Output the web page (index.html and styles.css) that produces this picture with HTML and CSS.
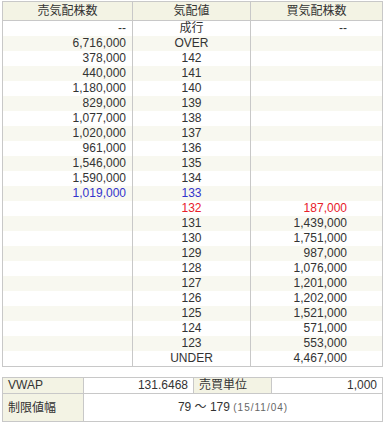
FILE: index.html
```html
<!DOCTYPE html>
<html lang="ja">
<head>
<meta charset="utf-8">
<link rel="stylesheet" href="styles.css">
</head>
<body>
<table class="book">
  <colgroup><col class="c1"><col class="c2"><col class="c3"></colgroup>
  <thead>
    <tr><th>売気配株数</th><th>気配値</th><th>買気配株数</th></tr>
  </thead>
  <tbody>
    <tr><td class="ask">--</td><td class="px">成行</td><td class="bid">--</td></tr>
    <tr><td class="ask">6,716,000</td><td class="px">OVER</td><td class="bid"></td></tr>
    <tr><td class="ask">378,000</td><td class="px">142</td><td class="bid"></td></tr>
    <tr><td class="ask">440,000</td><td class="px">141</td><td class="bid"></td></tr>
    <tr><td class="ask">1,180,000</td><td class="px">140</td><td class="bid"></td></tr>
    <tr><td class="ask">829,000</td><td class="px">139</td><td class="bid"></td></tr>
    <tr><td class="ask">1,077,000</td><td class="px">138</td><td class="bid"></td></tr>
    <tr><td class="ask">1,020,000</td><td class="px">137</td><td class="bid"></td></tr>
    <tr><td class="ask">961,000</td><td class="px">136</td><td class="bid"></td></tr>
    <tr><td class="ask">1,546,000</td><td class="px">135</td><td class="bid"></td></tr>
    <tr><td class="ask">1,590,000</td><td class="px">134</td><td class="bid"></td></tr>
    <tr><td class="ask blue">1,019,000</td><td class="px blue">133</td><td class="bid"></td></tr>
    <tr><td class="ask"></td><td class="px red">132</td><td class="bid red">187,000</td></tr>
    <tr><td class="ask"></td><td class="px">131</td><td class="bid">1,439,000</td></tr>
    <tr><td class="ask"></td><td class="px">130</td><td class="bid">1,751,000</td></tr>
    <tr><td class="ask"></td><td class="px">129</td><td class="bid">987,000</td></tr>
    <tr><td class="ask"></td><td class="px">128</td><td class="bid">1,076,000</td></tr>
    <tr><td class="ask"></td><td class="px">127</td><td class="bid">1,201,000</td></tr>
    <tr><td class="ask"></td><td class="px">126</td><td class="bid">1,202,000</td></tr>
    <tr><td class="ask"></td><td class="px">125</td><td class="bid">1,521,000</td></tr>
    <tr><td class="ask"></td><td class="px">124</td><td class="bid">571,000</td></tr>
    <tr><td class="ask"></td><td class="px">123</td><td class="bid">553,000</td></tr>
    <tr><td class="ask"></td><td class="px">UNDER</td><td class="bid">4,467,000</td></tr>
  </tbody>
</table>
<table class="info">
  <colgroup><col class="i1"><col class="i2"><col class="i3"><col class="i4"></colgroup>
  <tr class="r1"><th>VWAP</th><td class="val">131.6468</td><th>売買単位</th><td class="val">1,000</td></tr>
  <tr class="r2"><th>制限値幅</th><td class="range" colspan="3">79 ～ 179 <span class="date">(15/11/04)</span></td></tr>
</table>
</body>
</html>
```

FILE: styles.css
```css
html, body {
  margin: 0;
  padding: 0;
  background: #fff;
}
body {
  padding: 1px 0 0 2px;
  font-family: "Liberation Sans", "Noto Sans CJK JP", sans-serif;
  font-size: 12px;
  color: #333;
}
table {
  border-collapse: collapse;
  table-layout: fixed;
}
.book {
  width: 380px;
  border: 1px solid #c8c8c8;
}
.c1 { width: 130px; }
.c2 { width: 118px; }
.c3 { width: 132px; }
.book th {
  background: #f3f3e4;
  font-weight: normal;
  height: 18px;
  padding: 0;
  border-bottom: 1px solid #c8c8c8;
  border-left: 1px solid #c8c8c8;
  text-align: center;
  line-height: 18px;
}
.book td {
  height: 15px;
  line-height: 15px;
  padding: 0;
  border-left: 1px solid #c8c8c8;
  white-space: nowrap;
}
.book tbody tr:nth-child(even) td {
  background: #f8f8f0;
}
.ask { text-align: right; padding-right: 6px !important; }
.px { text-align: center; }
.bid { text-align: right; padding-right: 35px !important; }
.blue { color: #3333cc; }
.red { color: #e8202a; }

.info {
  width: 380px;
  margin-top: 10px;
  border: 1px solid #c8c8c8;
}
.i1 { width: 81px; }
.i2 { width: 110px; }
.i3 { width: 78px; }
.i4 { width: 111px; }
.info th, .info td {
  border: 1px solid #c8c8c8;
  padding: 0 5px;
  font-weight: normal;
  white-space: nowrap;
}
.info th {
  background: #f3f3e4;
  text-align: left;
}
.r1 th, .r1 td { height: 15px; line-height: 15px; }
.r2 th, .r2 td { height: 26px; line-height: 26px; }
.val { text-align: right; }
.range { text-align: center; }
.date {
  font-size: 10px;
  color: #666;
  letter-spacing: 1px;
}
```
